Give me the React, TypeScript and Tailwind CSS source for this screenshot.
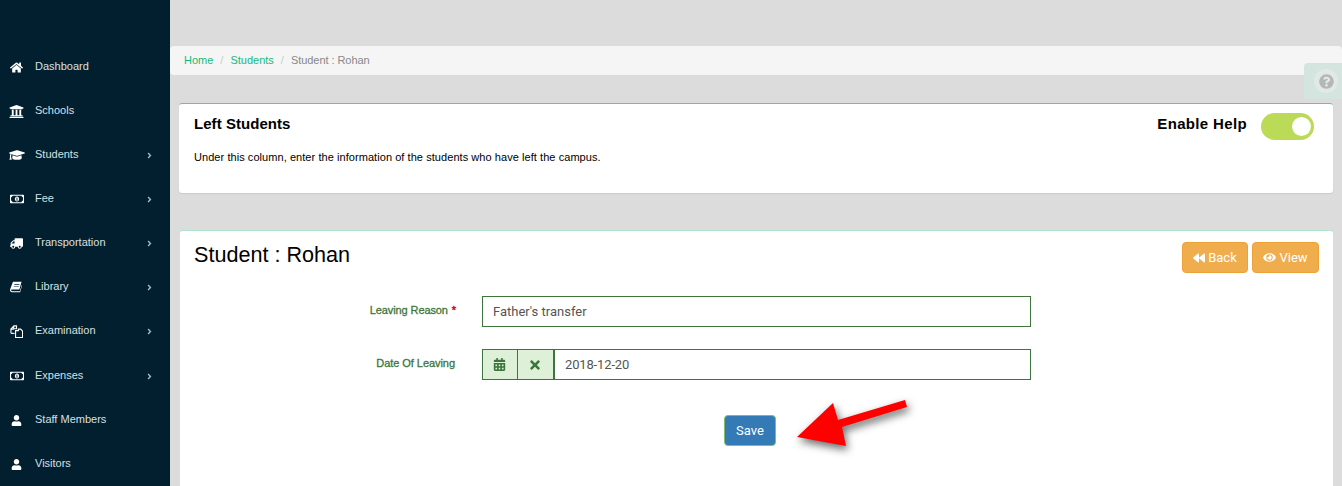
import React from 'react';
import { FaHome, FaUniversity, FaGraduationCap, FaRegMoneyBillAlt, FaTruck, FaUser, FaAngleRight, FaCalendarAlt, FaTimes, FaBackward, FaEye, FaQuestionCircle } from 'react-icons/fa';

function BookIcon({ className }: { className?: string }) {
  return (
    <svg className={className} viewBox="0 0 14 14" fill="currentColor">
      <path d="M4 1h9.5l-2.6 9H2.2c-.7 0-.9.5-.9.9 0 .6.4 1 1 1h9.2l2-7 .5.4-2.2 7.7H2.2C1 13 0 11.9 0 10.7c0-.3 0-.6.2-1L3 2c.2-.6.5-1 1-1zm1 2.5v.8h6v-.8H5zm-.6 2.2v.8h6v-.8h-6z" fillRule="evenodd" />
    </svg>
  );
}

function FilesIcon({ className }: { className?: string }) {
  return (
    <svg className={className} viewBox="0 0 14 14" fill="none" stroke="currentColor" strokeWidth="1.2">
      <path d="M1 9V4.4L4.2 1H7v3H4M4 4.2V1M1 4.4h3.2" />
      <path d="M1 9h4" />
      <path d="M6 13.4V6h3V4.5h2.5l2 2v6.9H6z" />
    </svg>
  );
}

const menu = [
  { label: 'Dashboard', icon: FaHome, iconClass: 'w-[13px] h-[13px]' },
  { label: 'Schools', icon: FaUniversity, iconClass: 'w-[15px] h-[15px] -ml-[1px]' },
  { label: 'Students', icon: FaGraduationCap, iconClass: 'w-[16px] h-[16px] -ml-[1px]', more: true },
  { label: 'Fee', icon: FaRegMoneyBillAlt, iconClass: 'w-[14px] h-[14px]', more: true },
  { label: 'Transportation', icon: FaTruck, iconClass: 'w-[13px] h-[13px] -scale-x-100', more: true },
  { label: 'Library', icon: BookIcon, iconClass: 'w-[12px] h-[12px]', more: true },
  { label: 'Examination', icon: FilesIcon, iconClass: 'w-[13px] h-[13px]', more: true },
  { label: 'Expenses', icon: FaRegMoneyBillAlt, iconClass: 'w-[14px] h-[14px]', more: true, rowClass: 'mt-[1px]' },
  { label: 'Staff Members', icon: FaUser, iconClass: 'w-[11px] h-[11px] ml-[1px]' },
  { label: 'Visitors', icon: FaUser, iconClass: 'w-[11px] h-[11px] ml-[1px]' },
];

function Sidebar() {
  return (
    <aside className="w-[170px] shrink-0 bg-[#011f2e] pt-[44px]">
      {menu.map((item) => (
        <div key={item.label} className={`h-[44px] flex items-center pl-[10px] pr-[16px] text-[11px] text-[#d5e0e5] ${item.rowClass ?? ''}`}>
          <span className="w-[25px] shrink-0 pt-[2px] text-white">
            <item.icon className={item.iconClass} />
          </span>
          <span className="flex-1 pt-[1px]">{item.label}</span>
          {item.more && <FaAngleRight className="w-[9px] h-[9px] mt-[3px] text-[#a9bcc5]" />}
        </div>
      ))}
    </aside>
  );
}

function Breadcrumb() {
  return (
    <div className="h-[29px] flex items-center px-[14px] bg-[#f5f5f5] rounded-[4px] text-[11px] text-[#888888]">
      <span className="text-[#18b87c]">Home</span>
      <span className="mx-[7px] text-[#cccccc]">/</span>
      <span className="text-[#18b87c]">Students</span>
      <span className="mx-[7px] text-[#cccccc]">/</span>
      <span className="tracking-[-0.05px]">Student : Rohan</span>
    </div>
  );
}

function HelpCard() {
  return (
    <section className="h-[90px] mt-[28px] mx-[9px] bg-white rounded-[3px] border-t border-[#62c79b] shadow-[0_1px_1px_rgba(0,0,0,0.08)] pl-[15px] pr-[19px] pt-[10px]">
      <div className="flex items-start justify-between">
        <h2 className="text-[15px] leading-[20px] font-bold tracking-[0.05px] text-black">Left Students</h2>
        <div className="flex items-start">
          <span className="text-[15px] leading-[20px] font-bold text-black tracking-[0.35px]">Enable Help</span>
          <div className="ml-[14px] mt-[-1px] w-[53px] h-[27px] rounded-full bg-[#bbda57] flex items-center justify-end pr-[3px]">
            <div className="w-[19px] h-[19px] rounded-full bg-white" />
          </div>
        </div>
      </div>
      <p className="mt-[9px] text-[11px] leading-[16px] tracking-[0.06px] text-black">Under this column, enter the information of the students who have left the campus.</p>
    </section>
  );
}

function StudentForm() {
  const inputBase = "h-[31px] border border-[#3c763d] flex items-center font-['Roboto',sans-serif] text-[13px] text-[#555555]";
  return (
    <section className="flex-1 mt-[37px] ml-[10px] mr-[9px] bg-white rounded-t-[3px] border-t border-[#aee5cc] pl-[14px] pr-[14px] pt-[11px]">
      <div className="flex items-start justify-between">
        <h1 className="text-[21.6px] leading-[26px] text-black">Student : Rohan</h1>
        <div className="flex gap-[4px] font-['Roboto',sans-serif]">
          <button type="button" className="h-[31px] w-[66px] flex items-center justify-center gap-[3px] rounded-[4px] bg-[#f0ad4e] border border-[#eea236] text-[13px] text-white">
            <FaBackward className="w-[12px] h-[12px]" /> Back
          </button>
          <button type="button" className="h-[31px] w-[67px] flex items-center justify-center gap-[3px] rounded-[4px] bg-[#f0ad4e] border border-[#eea236] text-[13px] text-white">
            <FaEye className="w-[13px] h-[13px]" /> View
          </button>
        </div>
      </div>

      <div className="mt-[23px] flex items-start">
        <label className="w-[262px] pt-[7px] text-right text-[11px] leading-[14px] tracking-[-0.1px] text-[#3c763d] [-webkit-text-stroke:0.3px_#3c763d]">
          Leaving Reason <span className="text-[#e00000] ml-[1px] [-webkit-text-stroke:0.4px_#e00000]">*</span>
        </label>
        <div className={`${inputBase} ml-[26px] w-[549px] pl-[10px]`}>Father's transfer</div>
      </div>

      <div className="mt-[22px] flex items-start">
        <label className="w-[261px] pt-[7px] text-right text-[11px] leading-[14px] tracking-[-0.05px] text-[#3c763d] [-webkit-text-stroke:0.3px_#3c763d]">
          Date Of Leaving
        </label>
        <div className={`${inputBase} ml-[27px] w-[549px]`}>
          <span className="w-[35px] h-full flex items-center justify-center bg-[#dff0d8] text-[#3c763d] border-r border-[#3c763d]">
            <FaCalendarAlt className="w-[13px] h-[13px] -ml-[2px]" />
          </span>
          <span className="w-[37px] h-full flex items-center justify-center bg-[#dff0d8] text-[#3c763d] border-r-2 border-[#3c763d]">
            <FaTimes className="w-[14px] h-[14px] -ml-[1px]" />
          </span>
          <span className="pl-[10px] tracking-[-0.15px]">2018-12-20</span>
        </div>
      </div>

      <div className="mt-[35px] pl-[530px]">
        <button type="button" className="h-[31px] w-[52px] rounded-[4px] bg-[#337ab7] border border-[#7fbf6a] font-['Roboto',sans-serif] text-[13px] text-white">Save</button>
      </div>
    </section>
  );
}

export default function App() {
  return (
    <div className="relative h-[486px] w-[1342px] overflow-hidden flex bg-[#dcdcdc] font-['Liberation_Sans',Arial,sans-serif]">
      <Sidebar />
      <main className="flex-1 min-w-0 pt-[46px] flex flex-col">
        <Breadcrumb />
        <HelpCard />
        <StudentForm />
      </main>

      <div className="absolute left-[1304px] top-[63px] w-[38px] h-[36px] rounded-l-[4px] bg-[#d3e5de] flex items-center pl-[10px]">
        <div className="w-[24px] h-[24px] rounded-full bg-[#e2e8e5] flex items-center justify-center">
          <FaQuestionCircle className="w-[15px] h-[15px] text-[#b3b8b6]" />
        </div>
      </div>

      <svg className="absolute left-[790px] top-[394px] drop-shadow-[2px_4px_4px_rgba(0,0,0,0.6)]" width="124" height="56" viewBox="0 0 124 56">
        <polygon points="7,43 43,9 48,26 115,6 117,13 52,33 56,52" fill="#ff0000" />
      </svg>
    </div>
  );
}
